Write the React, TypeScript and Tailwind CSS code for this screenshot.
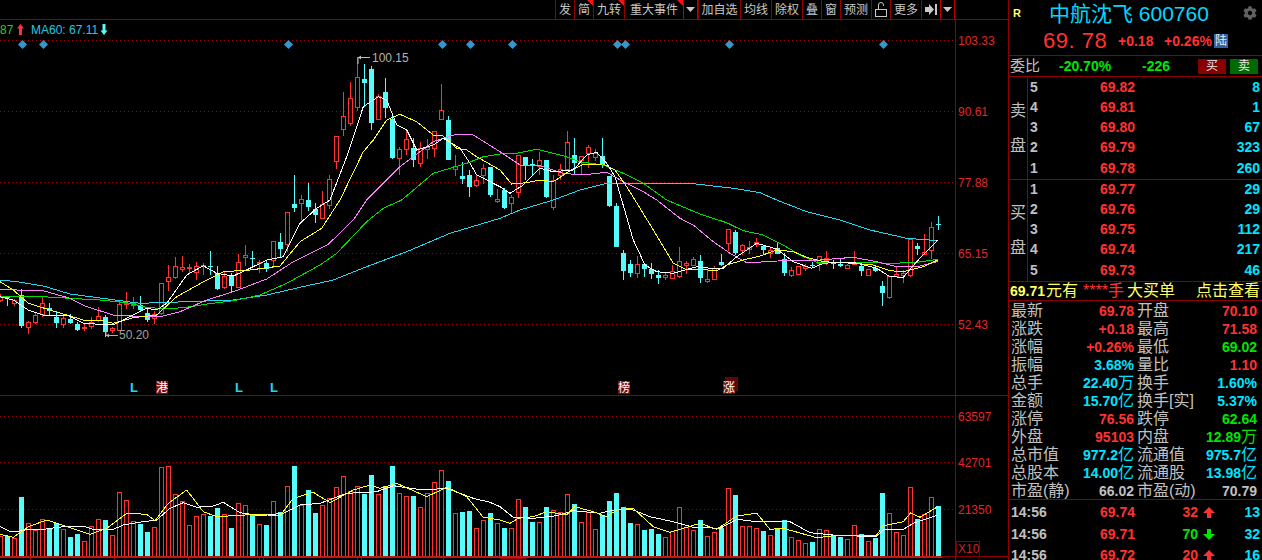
import { FaCog } from "react-icons/fa";

type Pt = [number, number];

const RED = "#ff3232";
const CYAN = "#54fcfc";

// y values read off the crops, three times the pixel size, from y=200
const CANDLES_A: number[][] = [
  [283, 290, 298, 305], [290, 292, 294, 318], [296, 300, 310, 318], [268, 285, 378, 384], [362, 367, 383, 401],
  [340, 345, 365, 372], [292, 310, 342, 352], [310, 323, 333, 347], [335, 351, 369, 383], [342, 355, 374, 383],
  [342, 357, 369, 373], [365, 371, 389, 393], [368, 381, 385, 392], [350, 367, 380, 386], [322, 349, 362, 365],
  [345, 351, 396, 412], [380, 385, 392, 400], [305, 313, 392, 392], [277, 308, 311, 328], [292, 310, 316, 328],
  [288, 314, 330, 334], [325, 340, 362, 365], [333, 342, 355, 372], [250, 250, 340, 345], [195, 232, 245, 273],
  [171, 199, 231, 238], [168, 202, 208, 216], [192, 201, 204, 218], [186, 198, 215, 240], [190, 196, 199, 226],
  [153, 198, 200, 225], [198, 219, 267, 270], [212, 229, 261, 268], [220, 229, 258, 276], [162, 187, 261, 263],
  [135, 166, 172, 198], [153, 174, 176, 198], [180, 185, 188, 220], [180, 189, 207, 216], [124, 124, 181, 205],
  [99, 126, 147, 170], [37, 37, 134, 155],
];

// the rest in plain pixels
const CANDLES_B: number[][] = [
  [175, 204, 208, 212], [195, 199, 203, 220], [183, 200, 207, 211], [203, 209, 215, 223], [191, 204, 218, 218],
  [175, 179, 205, 209], [136, 136, 161, 169], [92, 116, 129, 136], [82, 98, 123, 126], [57, 77, 107, 111],
  [64, 79, 83, 107], [66, 69, 123, 130], [94, 96, 119, 119], [78, 92, 108, 118], [115, 119, 158, 159],
  [147, 149, 158, 175], [131, 139, 149, 155], [138, 148, 160, 167], [142, 148, 163, 167], [139, 147, 149, 159],
  [131, 131, 148, 157], [84, 110, 119, 119], [116, 120, 160, 160], [155, 166, 169, 176], [162, 176, 179, 184],
  [170, 175, 187, 197], [175, 180, 185, 187], [164, 168, 175, 184], [167, 167, 195, 197], [189, 199, 201, 203],
  [188, 190, 208, 209], [195, 197, 203, 214], [155, 155, 192, 198], [157, 157, 165, 180], [159, 164, 166, 175],
  [152, 160, 166, 175], [160, 160, 197, 198], [175, 180, 207, 210], [164, 169, 175, 180], [131, 142, 169, 169],
  [138, 155, 163, 175], [156, 156, 160, 175], [145, 147, 153, 168], [149, 153, 157, 161], [138, 156, 165, 168],
  [176, 176, 206, 207], [203, 206, 247, 247], [250, 253, 271, 280], [260, 264, 273, 277], [256, 264, 273, 278],
  [263, 264, 269, 277], [263, 269, 274, 279], [270, 275, 278, 284], [272, 275, 277, 280], [265, 271, 278, 279],
  [247, 261, 276, 278], [261, 263, 265, 274], [257, 259, 265, 265], [255, 261, 278, 283], [269, 279, 281, 283],
  [266, 268, 279, 279], [254, 262, 265, 266], [229, 229, 243, 251], [230, 232, 253, 255], [244, 245, 250, 255],
  [241, 247, 249, 254], [238, 242, 244, 247], [245, 246, 250, 254], [247, 250, 253, 258], [242, 248, 254, 254],
  [253, 259, 273, 276], [267, 270, 275, 277], [266, 266, 274, 274], [264, 266, 268, 271], [262, 265, 266, 268],
  [256, 256, 263, 271], [251, 258, 260, 265], [260, 263, 264, 269], [259, 264, 266, 267], [264, 265, 268, 268],
  [251, 263, 264, 265], [264, 266, 271, 276], [269, 269, 275, 275], [266, 268, 271, 272], [281, 286, 293, 306],
  [276, 276, 297, 299], [267, 274, 276, 277], [270, 273, 275, 283], [239, 239, 275, 277], [243, 246, 249, 255],
  [234, 252, 254, 254], [222, 227, 250, 259], [216, 224, 225, 230],
];

const CANDLES = [...CANDLES_A.map((r) => r.map((v) => 200 + v / 3)), ...CANDLES_B];

// volume bar tops, three times the pixel size, from y=400
const VOLUME = [
  408, 408, 414, 291, 370, 390, 358, 385, 369, 388, 411, 402, 424, 379, 358, 360, 406, 277, 301, 364, 372, 396, 382, 202,
  199, 283, 304, 376, 349, 343, 347, 324, 343, 384, 310, 316, 346, 373, 375, 304, 336, 259, 198, 316, 270, 339, 316, 295,
  262, 229, 274, 259, 282, 225, 283, 258, 198, 280, 289, 288, 322, 280, 247, 211, 243, 340, 336, 333, 385, 361, 339, 370,
  384, 385, 298, 321, 366, 367, 321, 331, 337, 283, 312, 367, 336, 388, 346, 303, 279, 321, 369, 373, 390, 387, 402, 412,
  394, 322, 380, 391, 360, 409, 397, 385, 265, 285, 379, 379, 385, 393, 406, 384, 361, 412, 421, 430, 426, 388, 391, 405,
  411, 418, 376, 403, 424, 414, 279, 340, 397, 406, 262, 357, 343, 292, 318,
];

const CYAN_BARS = new Set([
  1, 3, 7, 8, 10, 11, 15, 20, 21, 30, 31, 33, 36, 38, 40, 42, 44, 45, 52, 53, 55, 56, 59, 64, 66, 67, 70, 72, 75, 76, 78,
  82, 86, 87, 88, 89, 90, 92, 93, 94, 100, 103, 105, 109, 111, 112, 116, 119, 120, 123, 125, 126, 131, 134,
]);

const seg = (ox: number, oy: number, pts: number[][]): Pt[] => pts.map(([x, y]) => [ox + x / 3, oy + y / 3]);
const toPoints = (pts: Pt[]) => pts.map(([x, y]) => `${x.toFixed(1)},${y.toFixed(1)}`).join(" ");

const MA5: Pt[] = [
  ...seg(0, 200, [[0, 290], [40, 300], [85, 330], [130, 345], [200, 345], [250, 370], [300, 373], [340, 375], [400, 345], [440, 325], [470, 330], [500, 310], [560, 225], [610, 197], [650, 220], [700, 228], [750, 205], [800, 180], [850, 170], [900, 70], [950, 25], [990, 0]]),
  ...seg(0, 0, [[1040, 470], [1090, 320], [1135, 290], [1160, 300], [1190, 375], [1220, 390], [1250, 450], [1300, 435], [1330, 415], [1380, 445], [1410, 490], [1430, 525], [1500, 560]]),
  ...seg(500, 0, [[30, 580], [70, 555], [120, 505], [160, 515], [220, 510], [260, 465], [290, 457], [320, 490], [345, 530], [365, 600]]),
  ...seg(500, 200, [[400, 120], [435, 195], [470, 215], [520, 220], [590, 200], [650, 207], [670, 205], [710, 170], [770, 130], [830, 147], [880, 185], [935, 205], [970, 190], [1000, 188], [1060, 187], [1130, 205], [1170, 230], [1210, 232], [1250, 185], [1313, 120]]),
];

const MA10: Pt[] = [
  ...seg(0, 200, [[0, 245], [40, 270], [85, 310], [150, 330], [200, 345], [250, 360], [300, 360], [340, 370], [400, 353], [470, 345], [530, 290], [620, 240], [670, 215], [750, 210], [840, 198], [900, 125], [965, 85], [1020, 0]]),
  ...seg(0, 0, [[1090, 455], [1120, 420], [1160, 360], [1200, 343], [1250, 365], [1300, 405], [1325, 405], [1370, 445], [1400, 450], [1430, 470], [1500, 510]]),
  ...seg(500, 0, [[35, 552], [80, 548], [120, 540], [160, 545], [210, 512], [250, 493], [310, 492], [345, 510], [380, 560], [405, 600]]),
  ...seg(500, 200, [[460, 90], [520, 190], [560, 210], [600, 207], [650, 213], [680, 195], [730, 180], [780, 168], [830, 150], [880, 155], [920, 172], [970, 185], [1060, 190], [1120, 195], [1170, 212], [1210, 215], [1270, 200], [1313, 180]]),
];

const MA20: Pt[] = [
  ...seg(0, 200, [[0, 268], [50, 270], [130, 272], [210, 295], [260, 320], [340, 345], [430, 350], [480, 350], [540, 335], [620, 300], [700, 275], [800, 237], [880, 185], [985, 133], [1060, 60], [1100, 0]]),
  ...seg(0, 0, [[1200, 500], [1300, 425], [1370, 402], [1420, 405], [1500, 455]]),
  ...seg(500, 0, [[60, 495], [120, 497], [190, 520], [245, 525], [320, 517], [370, 545], [430, 575], [470, 600]]),
  ...seg(500, 200, [[540, 55], [580, 75], [640, 125], [690, 160], [740, 188], [800, 185], [880, 180], [960, 180], [1060, 172], [1130, 185], [1190, 200], [1250, 200], [1313, 185]]),
];

const MA30: Pt[] = [
  ...seg(0, 200, [[0, 290], [130, 290], [210, 295], [300, 300], [380, 308], [440, 322], [500, 327], [560, 322], [620, 312], [700, 302], [780, 285], [860, 250], [960, 195], [1010, 160], [1100, 65], [1150, 25], [1205, 0]]),
  ...seg(0, 0, [[1300, 520], [1400, 490], [1450, 470], [1500, 462]]),
  ...seg(500, 0, [[50, 460], [110, 448], [190, 467], [240, 485], [310, 495], [370, 520], [430, 550], [500, 600]]),
  ...seg(500, 200, [[600, 42], [680, 68], [730, 92], [790, 105], [850, 135], [900, 165], [950, 187], [1060, 187], [1180, 190], [1250, 187], [1313, 178]]),
];

const MA60: Pt[] = [
  ...seg(0, 200, [[0, 240], [50, 245], [130, 258], [210, 282], [330, 298], [420, 310], [560, 305], [700, 300], [800, 285], [900, 262], [1000, 240], [1100, 200], [1220, 155], [1350, 100], [1500, 55]]),
  ...seg(500, 200, [[60, 30], [160, 0]]),
  ...seg(500, 0, [[240, 570], [320, 550], [570, 550], [700, 565], [780, 578], [830, 600]]),
  ...seg(500, 200, [[920, 35], [1020, 60], [1110, 90], [1220, 115], [1313, 122]]),
];

const VOL_MA_A: Pt[] = [
  ...seg(0, 400, [[0, 403], [40, 412], [85, 380], [140, 360], [200, 380], [270, 403], [320, 385], [380, 340], [440, 343], [465, 362], [505, 310], [560, 270], [610, 335], [650, 350], [770, 343], [840, 347], [880, 295], [940, 277], [990, 308], [1060, 270], [1110, 255], [1140, 265], [1190, 250], [1280, 290], [1340, 262], [1400, 290], [1450, 352], [1500, 360]]),
  ...seg(500, 400, [[30, 370], [55, 355], [100, 350], [140, 335], [200, 345], [225, 320], [280, 335], [320, 350], [350, 330], [400, 325], [460, 380], [510, 397], [600, 370], [650, 388], [710, 348], [770, 340], [810, 388], [850, 385], [950, 413], [1020, 405], [1130, 405], [1150, 377], [1210, 365], [1232, 338], [1260, 352], [1313, 320]]),
];

const VOL_MA_B: Pt[] = [
  ...seg(0, 400, [[0, 380], [30, 395], [50, 395], [85, 388], [130, 388], [190, 380], [255, 380], [280, 388], [340, 388], [370, 375], [430, 365], [470, 360], [510, 325], [550, 308], [590, 322], [640, 318], [670, 307], [720, 338], [780, 347], [850, 340], [900, 315], [960, 310], [1040, 280], [1080, 278], [1130, 275], [1180, 257], [1270, 270], [1340, 265], [1420, 295], [1470, 307], [1500, 320]]),
  ...seg(500, 400, [[40, 352], [100, 355], [170, 347], [220, 332], [300, 340], [350, 328], [400, 330], [450, 350], [520, 365], [580, 382], [660, 385], [710, 358], [770, 365], [870, 365], [930, 398], [1000, 405], [1070, 408], [1130, 408], [1150, 390], [1210, 388], [1240, 370], [1313, 345]]),
];

const DIAMONDS = [22, 43, 288, 442, 470, 512, 617, 625, 729, 883];
const PRICE_GRID = [
  { y: 40, label: "103.33" },
  { y: 111, label: "90.61" },
  { y: 182, label: "77.88" },
  { y: 253, label: "65.15" },
  { y: 324, label: "52.43" },
];
const VOL_GRID = [
  { y: 416, label: "63597" },
  { y: 462, label: "42701" },
  { y: 509, label: "21350" },
];
const BASE_TICKS = [30, 114, 188, 259, 263, 357, 361, 443, 525];

function Chart() {
  return (
    <svg width={1008} height={540} viewBox="0 20 1008 540" className="block shrink-0">
      {[...PRICE_GRID, ...VOL_GRID].map((g) => (
        <g key={g.y}>
          <line x1={0} x2={955} y1={g.y + 0.5} y2={g.y + 0.5} stroke="#a00000" strokeDasharray="1 3" />
          <text x={958} y={g.y + 5} fill="#e02626" fontSize={12}>{g.label}</text>
        </g>
      ))}
      <line x1={955.5} x2={955.5} y1={20} y2={560} stroke="#900000" />
      <line x1={0} x2={1008} y1={395.5} y2={395.5} stroke="#900000" />

      <text x={0} y={34} fill="#22cc22" fontSize={12}>87</text>
      <path d="M20.5 24l3.5 4.5h-2v6.5h-3v-6.5h-2z" fill={RED} />
      <text x={31} y={34} fill="#22c8e0" fontSize={12}>MA60: 67.11</text>
      <path d="M104 35l3.5-4.5h-2V24h-3v6.5h-2z" fill={CYAN} />

      {DIAMONDS.map((x) => (
        <path key={x} d={`M${x + 0.5} 40l4.5 4.5-4.5 4.5-4.5-4.5z`} fill="#3399cc" />
      ))}

      <g shapeRendering="crispEdges">
        {CANDLES.map(([high, top, bottom, low], i) => {
          const x = 7 * i;
          const isCyan = CYAN_BARS.has(i);
          const color = isCyan ? CYAN : RED;
          return (
            <g key={i}>
              <line x1={x + 0.5} x2={x + 0.5} y1={Math.round(high)} y2={Math.round(low)} stroke={color} />
              {isCyan ? (
                <rect x={x - 2} y={Math.round(top)} width={5} height={Math.max(1, Math.round(bottom - top))} fill={color} />
              ) : (
                <rect x={x - 1.5} y={Math.round(top) + 0.5} width={4} height={Math.max(1, Math.round(bottom - top))} fill="#000" stroke={color} />
              )}
            </g>
          );
        })}
      </g>

      <g fill="none" shapeRendering="crispEdges">
        <polyline points={toPoints(MA60)} stroke="#20d8f0" />
        <polyline points={toPoints(MA30)} stroke="#00e000" />
        <polyline points={toPoints(MA20)} stroke="#ff80ff" />
        <polyline points={toPoints(MA10)} stroke="#ffff20" />
        <polyline points={toPoints(MA5)} stroke="#ffffff" />
      </g>

      <path d="M358 64V57.5h12" fill="none" stroke="#c0c0c0" />
      <path d="M358 57.5l3-2v4z" fill="#c0c0c0" />
      <text x={372} y={62} fill="#b4b4b4" fontSize={12}>100.15</text>
      <path d="M106 330v5.5h12" fill="none" stroke="#b0b0b0" />
      <path d="M106 335.5l3-2v4z" fill="#b0b0b0" />
      <text x={119} y={339} fill="#a0a0a0" fontSize={12}>50.20</text>

      <text x={130} y={392} fill="#18d8f8" fontSize={13} fontWeight={700}>L</text>
      <text x={235} y={392} fill="#18d8f8" fontSize={13} fontWeight={700}>L</text>
      <text x={270} y={392} fill="#18d8f8" fontSize={13} fontWeight={700}>L</text>
      <rect x={156} y={381} width={12} height={13} fill="#7c0c0c" />
      <text x={156} y={392} fill="#fff" fontSize={12}>港</text>
      <rect x={618} y={381} width={12} height={13} fill="#7c0c0c" />
      <text x={618} y={392} fill="#fff" fontSize={12}>榜</text>
      <rect x={725} y={377} width={13} height={14} fill="#5c0808" />
      <rect x={723} y={381} width={12} height={13} fill="#7c0c0c" />
      <text x={723} y={392} fill="#fff" fontSize={12}>涨</text>

      <g shapeRendering="crispEdges">
        {VOLUME.map((z, i) => {
          const x = 7 * i;
          const top = Math.round(400 + z / 3);
          return CYAN_BARS.has(i) ? (
            <rect key={i} x={x - 2} y={top} width={5} height={556 - top} fill={CYAN} />
          ) : (
            <rect key={i} x={x - 1.5} y={top + 0.5} width={4} height={556 - top} fill="#000" stroke={RED} />
          );
        })}
        <rect x={0} y={556} width={942} height={2} fill="#c01818" />
        <line x1={942} x2={1008} y1={556.5} y2={556.5} stroke="#900000" />
        {BASE_TICKS.map((x) => (
          <rect key={x} x={x} y={558} width={1} height={2} fill="#a00000" />
        ))}
        <rect x={500} y={558} width={26} height={1} fill="#a00000" />
      </g>
      <g fill="none" shapeRendering="crispEdges">
        <polyline points={toPoints(VOL_MA_B)} stroke="#ffffff" />
        <polyline points={toPoints(VOL_MA_A)} stroke="#ffff20" />
      </g>
      <rect x={956.5} y={541.5} width={23} height={15} fill="none" stroke="#800000" />
      <text x={958} y={553} fill="#c82424" fontSize={12}>X10</text>
    </svg>
  );
}

const TOOLS = [
  { label: "发", w: "w-[19px]" },
  { label: "简", w: "w-[19px]", flag: true },
  { label: "九转", w: "w-[31px]", flag: true },
  { label: "重大事件", w: "w-[59px]", flag: true },
  { caret: true, w: "w-[15px]" },
  { label: "加自选", w: "w-[42px]" },
  { label: "均线", w: "w-[31px]" },
  { label: "除权", w: "w-[31px]" },
  { label: "叠", w: "w-[19px]" },
  { label: "窗", w: "w-[19px]" },
  { label: "预测", w: "w-[31px]" },
  { lock: true, w: "w-[19px]" },
  { label: "更多", w: "w-[31px]" },
  { pin: true, w: "w-[19px]" },
  { caret: true, w: "w-[15px]" },
];

function Toolbar() {
  return (
    <div className="flex h-5 w-[1008px] shrink-0 justify-start border-b border-[#900000] pl-[555px]">
      {TOOLS.map((t, i) => (
        <div
          key={i}
          className={`relative flex h-[19px] items-center justify-center text-[12px] text-[#c8c8c8] ${t.w} ${
            t.caret ? "border-x border-[#c00000]" : "border-l border-[#900000]"
          }`}
        >
          {t.label}
          {t.flag && (
            <span className="absolute right-0 top-0 h-[6px] w-[6px] bg-[#ff1010] [clip-path:polygon(0_0,100%_0,100%_100%)]" />
          )}
          {t.caret && (
            <svg width={9} height={5} viewBox="0 0 9 5">
              <path d="M0 0h9L4.5 5z" fill="#c8c8c8" />
            </svg>
          )}
          {t.lock && (
            <svg width={12} height={16} viewBox="0 0 12 16" fill="none" stroke="#c8c8c8">
              <path d="M3.5 7V3a2.5 2.5 0 015 0v1" />
              <rect x={0.5} y={7.5} width={11} height={7} />
            </svg>
          )}
          {t.pin && (
            <svg width={12} height={11} viewBox="0 0 12 11">
              <path d="M0 3h4V0l5 5.5L4 11V8H0zM10 0h2v11h-2z" fill="#c8c8c8" />
            </svg>
          )}
        </div>
      ))}
    </div>
  );
}

const NUM_RED = "text-[#ff3232]";
const NUM_CYAN = "text-[#00e4ff]";
const NUM_GREEN = "text-[#00e600]";
const NUM_GRAY = "text-[#c0c0c0]";

function Num({ value, unit, color }: { value: string; unit?: string; color: string }) {
  return (
    <span className={`whitespace-nowrap ${color}`}>
      <span className="text-[14px] font-bold">{value}</span>
      {unit && <span className="text-[16px]">{unit}</span>}
    </span>
  );
}

function Quote({ side, rows, box, list }: { side: string; rows: [string, string, string][]; box: string; list: string }) {
  return (
    <div className={`flex shrink-0 border-b border-[#900000] ${box}`}>
      <div className="flex w-[19px] shrink-0 flex-col items-center justify-center gap-[19px] border-r border-[#900000] text-[16px] leading-4 text-[#c0c0c0]">
        <span>{side}</span>
        <span>盘</span>
      </div>
      <div className={`flex flex-1 flex-col pr-[2px] ${list}`}>
        {rows.map(([n, price, vol]) => (
          <div key={n} className="relative flex h-[20.25px] shrink-0 items-center justify-between">
            <span className="pl-[2px] text-[14px] font-bold text-[#c0c0c0]">{n}</span>
            <span className="absolute right-[125px] text-[14px] font-bold text-[#ff3232]">{price}</span>
            <span className="text-[14px] font-bold text-[#00e4ff]">{vol}</span>
          </div>
        ))}
      </div>
    </div>
  );
}

const STATS: { a: string; av: string; au?: string; ac: string; b: string; bv: string; bu?: string; bc: string }[] = [
  { a: "最新", av: "69.78", ac: NUM_RED, b: "开盘", bv: "70.10", bc: NUM_RED },
  { a: "涨跌", av: "+0.18", ac: NUM_RED, b: "最高", bv: "71.58", bc: NUM_RED },
  { a: "涨幅", av: "+0.26%", ac: NUM_RED, b: "最低", bv: "69.02", bc: NUM_GREEN },
  { a: "振幅", av: "3.68%", ac: NUM_CYAN, b: "量比", bv: "1.10", bc: NUM_RED },
  { a: "总手", av: "22.40", au: "万", ac: NUM_CYAN, b: "换手", bv: "1.60%", bc: NUM_CYAN },
  { a: "金额", av: "15.70", au: "亿", ac: NUM_CYAN, b: "换手[实]", bv: "5.37%", bc: NUM_CYAN },
  { a: "涨停", av: "76.56", ac: NUM_RED, b: "跌停", bv: "62.64", bc: NUM_GREEN },
  { a: "外盘", av: "95103", ac: NUM_RED, b: "内盘", bv: "12.89", bu: "万", bc: NUM_GREEN },
  { a: "总市值", av: "977.2", au: "亿", ac: NUM_CYAN, b: "流通值", bv: "975.7", bu: "亿", bc: NUM_CYAN },
  { a: "总股本", av: "14.00", au: "亿", ac: NUM_CYAN, b: "流通股", bv: "13.98", bu: "亿", bc: NUM_CYAN },
  { a: "市盈(静)", av: "66.02", ac: NUM_GRAY, b: "市盈(动)", bv: "70.79", bc: NUM_GRAY },
];

const TRADES = [
  { price: "69.74", vol: "32", up: true, n: "13" },
  { price: "69.71", vol: "70", up: false, n: "32" },
  { price: "69.72", vol: "20", up: true, n: "16" },
];

function SidePanel() {
  return (
    <div className="flex h-[560px] w-[254px] shrink-0 flex-col border-l border-[#900000] text-[#c0c0c0]">
      <div className="relative flex h-[27px] shrink-0 items-center pl-[40px]">
        <span className="absolute left-[4px] top-[7px] text-[11px] font-bold leading-3 text-[#ffff66]">R</span>
        <span className="whitespace-nowrap text-[21px] leading-6 text-[#00d8ff]">中航沈飞 600760</span>
        <FaCog className="absolute right-[5px] top-[6px] text-[14px] text-[#606060]" />
      </div>
      <div className="flex h-[29px] shrink-0 items-center border-b border-[#900000] pl-[34px]">
        <span className="w-[75px] text-[22px] leading-6 tracking-[0.5px] text-[#ff3232]">69. 78</span>
        <span className="w-[46px] text-[14px] font-bold text-[#ff3232]">+0.18</span>
        <span className="w-[50px] text-[14px] font-bold text-[#ff3232]">+0.26%</span>
        <span className="flex h-[14px] w-[14px] items-center justify-center bg-[#3060a8] text-[12px] leading-3 text-[#e8e8e8]">
          陆
        </span>
      </div>
      <div className="flex h-[21px] shrink-0 items-center border-b border-[#900000] pl-[1px]">
        <span className="w-[49px] text-[15px] leading-4">委比</span>
        <span className="w-[83px] text-[14px] font-bold text-[#00e600]">-20.70%</span>
        <span className="w-[56px] text-[14px] font-bold text-[#00e600]">-226</span>
        <span className="flex h-[15px] w-[28px] items-center justify-center bg-[#880000] text-[12px] leading-3 text-[#e8e8e8]">
          买
        </span>
        <span className="ml-[4px] flex h-[15px] w-[28px] items-center justify-center bg-[#006a00] text-[12px] leading-3 text-[#e8e8e8]">
          卖
        </span>
      </div>
      <Quote
        side="卖"
        box="h-[103px]"
        list="pt-0"
        rows={[
          ["5", "69.82", "8"],
          ["4", "69.81", "1"],
          ["3", "69.80", "67"],
          ["2", "69.79", "323"],
          ["1", "69.78", "260"],
        ]}
      />
      <Quote
        side="买"
        box="h-[102px]"
        list="-mt-px"
        rows={[
          ["1", "69.77", "29"],
          ["2", "69.76", "29"],
          ["3", "69.75", "112"],
          ["4", "69.74", "217"],
          ["5", "69.73", "46"],
        ]}
      />
      <div className="flex h-[19px] shrink-0 items-center whitespace-nowrap border-b border-[#900000] pl-[1px] text-[16px] leading-4 text-[#ffff66]">
        <span className="text-[14px] font-bold">69.71</span>
        <span className="w-[38px] pl-[1px]">元有</span>
        <span className="w-[44px] text-[#ff3232]">****手</span>
        <span className="w-[69px]">大买单</span>
        <span>点击查看</span>
      </div>
      <div className="flex h-[199px] shrink-0 flex-col border-b border-[#900000] pt-[1px]">
        {STATS.map((s) => (
          <div key={s.a} className="flex h-[18px] shrink-0 items-center text-[16px] leading-4 text-[#c0c0c0]">
            <div className="flex w-[125px] items-center justify-between pl-[2px]">
              <span className="whitespace-nowrap">{s.a}</span>
              <Num value={s.av} unit={s.au} color={s.ac} />
            </div>
            <div className="flex w-[123px] items-center justify-between pl-[3px]">
              <span className="whitespace-nowrap">{s.b}</span>
              <Num value={s.bv} unit={s.bu} color={s.bc} />
            </div>
          </div>
        ))}
      </div>
      <div className="flex flex-col pt-[2px]">
        {TRADES.map((t) => (
          <div key={t.price} className="flex h-[21.5px] shrink-0 items-center text-[14px] font-bold">
            <span className="w-[70px] pl-[2px] text-[#c0c0c0]">14:56</span>
            <span className="w-[56px] text-right text-[#ff3232]">{t.price}</span>
            <span className={`w-[63px] text-right ${t.up ? "text-[#ff3232]" : "text-[#00e600]"}`}>{t.vol}</span>
            <svg width={12} height={11} viewBox="0 0 12 11" className="ml-[5px]">
              {t.up ? <path d="M6 0l6 6H8v5H4V6H0z" fill="#ff3232" /> : <path d="M6 11L0 5h4V0h4v5h4z" fill="#00e600" />}
            </svg>
            <span className="w-[45px] text-right text-[#00e4ff]">{t.n}</span>
          </div>
        ))}
      </div>
    </div>
  );
}

export default function App() {
  return (
    <div className="flex h-[560px] w-[1262px] overflow-hidden bg-black font-['Liberation_Sans','Noto_Sans_CJK_SC',sans-serif]">
      <div className="flex w-[1008px] shrink-0 flex-col">
        <Toolbar />
        <Chart />
      </div>
      <SidePanel />
    </div>
  );
}
